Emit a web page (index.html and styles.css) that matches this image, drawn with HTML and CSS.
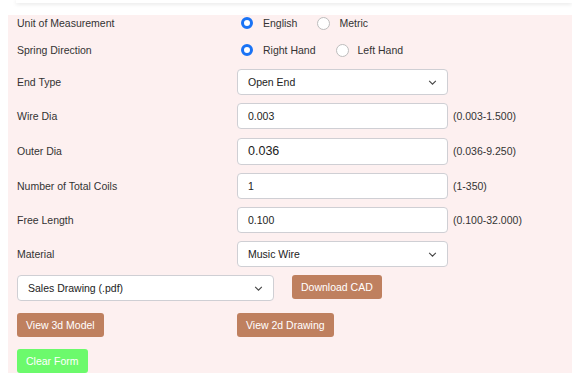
FILE: index.html
```html
<!DOCTYPE html>
<html lang="en">
<head>
    <meta charset="UTF-8">
    <meta name="viewport" content="width=device-width, initial-scale=1.0">
    <title>Spring Designer</title>
    <link rel="stylesheet" href="styles.css">
</head>
<body>

<div class="top-card"></div>

<div class="panel">
    <!-- radio rows -->
    <div class="row radio-row">
        <span class="label">Unit of Measurement</span>
        <label class="radio"><input type="radio" name="unit" checked><span>English</span></label>
        <label class="radio"><input type="radio" name="unit"><span>Metric</span></label>
    </div>
    <div class="row radio-row">
        <span class="label">Spring Direction</span>
        <label class="radio"><input type="radio" name="dir" checked><span>Right Hand</span></label>
        <label class="radio"><input type="radio" name="dir"><span>Left Hand</span></label>
    </div>

    <!-- inputs -->
    <div class="row">
        <span class="label">End Type</span>
        <div class="select-wrap">
            <select class="field"><option>Open End</option></select>
            <svg class="chevron" viewBox="0 0 10 6"><path d="M1 1l4 4 4-4" fill="none" stroke="#444" stroke-width="1.3"/></svg>
        </div>
    </div>
    <div class="row">
        <span class="label">Wire Dia</span>
        <input class="field" type="text" value="0.003">
        <span class="hint">(0.003-1.500)</span>
    </div>
    <div class="row tall">
        <span class="label">Outer Dia</span>
        <input class="field big" type="text" value="0.036">
        <span class="hint">(0.036-9.250)</span>
    </div>
    <div class="row">
        <span class="label">Number of Total Coils</span>
        <input class="field" type="text" value="1">
        <span class="hint">(1-350)</span>
    </div>
    <div class="row">
        <span class="label">Free Length</span>
        <input class="field" type="text" value="0.100">
        <span class="hint">(0.100-32.000)</span>
    </div>
    <div class="row">
        <span class="label">Material</span>
        <div class="select-wrap">
            <select class="field"><option>Music Wire</option></select>
            <svg class="chevron" viewBox="0 0 10 6"><path d="M1 1l4 4 4-4" fill="none" stroke="#444" stroke-width="1.3"/></svg>
        </div>
    </div>

    <!-- downloads -->
    <div class="row dl-row">
        <div class="select-wrap wide">
            <select class="field"><option>Sales Drawing (.pdf)</option></select>
            <svg class="chevron" viewBox="0 0 10 6"><path d="M1 1l4 4 4-4" fill="none" stroke="#444" stroke-width="1.3"/></svg>
        </div>
        <button class="btn btn-cad">Download CAD</button>
    </div>
    <div class="row btn-row">
        <div class="label"><button class="btn">View 3d Model</button></div>
        <button class="btn">View 2d Drawing</button>
    </div>
    <div class="row btn-row last">
        <button class="btn btn-clear">Clear Form</button>
    </div>
</div>

</body>
</html>
```

FILE: styles.css
```css
body {
    font-family: "Liberation Sans", Arial, sans-serif;
    font-size: 10.5px;
    color: #333;
    background-color: #fff;
    margin: 0;
}
.top-card {
    height: 3px;
    margin-left: 16px;
    background-color: #fff;
    box-shadow: 0 1px 4px rgba(0, 0, 0, 0.12);
}
.panel {
    margin: 12px 0 0 8px;
    padding: 0 0 0 9px;
    background-color: #fdf0f0;
}
.row {
    display: flex;
    align-items: center;
    height: 26px;
    margin-bottom: 8px;
}
.row.tall {
    height: 28px;
}
.radio-row {
    height: 16px;
    margin-bottom: 11px;
}
.label {
    width: 220px;
    flex-shrink: 0;
}
.radio {
    display: flex;
    align-items: center;
    margin-right: 16px;
}
.radio input {
    appearance: none;
    width: 13px;
    height: 13px;
    margin: 0 9px 0 4px;
    border: 1px solid #bdbdbd;
    border-radius: 50%;
    background-color: #fff;
}
.radio input:checked {
    width: 12px;
    height: 12px;
    margin-right: 10px;
    border: 3.5px solid #1a73f5;
}
.field {
    width: 211px;
    height: 26px;
    box-sizing: border-box;
    padding: 0 10px;
    border: 1px solid #cfcfd4;
    border-radius: 4px;
    background-color: #fff;
    font-family: inherit;
    font-size: 10.5px;
    color: #222;
    appearance: none;
    margin: 0;
}
.field.big {
    height: 27px;
    font-size: 12.5px;
}
.select-wrap {
    position: relative;
}
.select-wrap.wide .field {
    width: 257px;
}
.chevron {
    position: absolute;
    right: 11px;
    top: 11px;
    width: 9px;
    height: 5px;
}
.hint {
    margin-left: 5px;
}
.dl-row {
    margin-bottom: 12px;
}
.btn-row {
    height: 24px;
    margin-bottom: 12px;
}
.btn-row.last {
    margin-bottom: 0;
}
.btn {
    height: 24px;
    padding: 0 9px;
    border: none;
    border-radius: 3px;
    background-color: #bf805f;
    color: #fff;
    font-family: inherit;
    font-size: 10.5px;
}
.btn-cad {
    margin-left: 18px;
    align-self: flex-start;
}
.btn-clear {
    background-color: #6cfa6c;
}
```
